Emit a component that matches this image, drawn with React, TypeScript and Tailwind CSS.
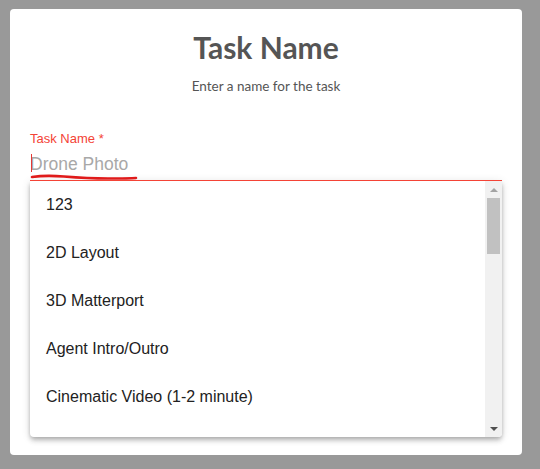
import React from 'react';

const options = [
  '123',
  '2D Layout',
  '3D Matterport',
  'Agent Intro/Outro',
  'Cinematic Video (1-2 minute)',
];

function Scrollbar() {
  return (
    <div className="flex w-[17px] flex-col items-center bg-[#f1f1f1]">
      <div className="flex h-[17px] w-full items-center justify-center">
        <div className="h-0 w-0 border-x-[4px] border-b-[4px] border-x-transparent border-b-[#a3a3a3]" />
      </div>
      <div className="h-[56px] w-[13px] bg-[#c1c1c1]" />
      <div className="flex-1" />
      <div className="flex h-[17px] w-full items-center justify-center">
        <div className="h-0 w-0 border-x-[4px] border-t-[4px] border-x-transparent border-t-[#505050]" />
      </div>
    </div>
  );
}

export default function App() {
  return (
    <div className="min-h-[469px] bg-[#999999] pl-[10px] pt-[9px]">
      <div className="h-[446px] w-[512px] rounded-[4px] bg-white px-[20px] pt-[20px]">
        <h1 className="text-center font-['Lato',sans-serif] text-[30px] font-bold leading-[36px] text-[#555555]">
          Task Name
        </h1>
        <p className="mt-[13px] text-center font-['Lato',sans-serif] text-[13.5px] leading-[16px] text-[#555555]">
          Enter a name for the task
        </p>

        <div className="mt-[38px] font-['Liberation_Sans',Arial,sans-serif]">
          <label className="block text-[13px] leading-[14px] text-[#f44336]">
            Task Name *
          </label>
          <div className="relative mt-[8px] pb-[6px]">
            <div className="text-[17.5px] leading-[20px] text-[#a8a8a8]">
              Drone Photo
            </div>
            <div className="absolute left-[1px] top-0 h-[18px] w-px bg-[#e53935]" />
            <svg
              className="absolute left-0 top-[20px]"
              width="110"
              height="8"
              viewBox="0 0 110 8"
            >
              <path
                d="M2 3 C 12 1.5, 22 1.5, 34 2.5 S 60 4.5, 78 4.5 S 100 4.5, 106 4"
                fill="none"
                stroke="#e01b1b"
                strokeWidth="2.6"
                strokeLinecap="round"
              />
            </svg>
          </div>
          <div className="relative z-10 h-px w-full bg-[#f44336]" />

          <div className="flex h-[256px] overflow-hidden rounded-b-[4px] bg-white shadow-[0_2px_4px_-1px_rgba(0,0,0,0.2),0_4px_5px_0_rgba(0,0,0,0.14),0_1px_10px_0_rgba(0,0,0,0.12)]">
            <ul className="flex-1">
              {options.map((o) => (
                <li
                  key={o}
                  className="h-[48px] px-[16px] text-[16px] leading-[48px] text-[#222222]"
                >
                  {o}
                </li>
              ))}
            </ul>
            <Scrollbar />
          </div>
        </div>
      </div>
    </div>
  );
}
